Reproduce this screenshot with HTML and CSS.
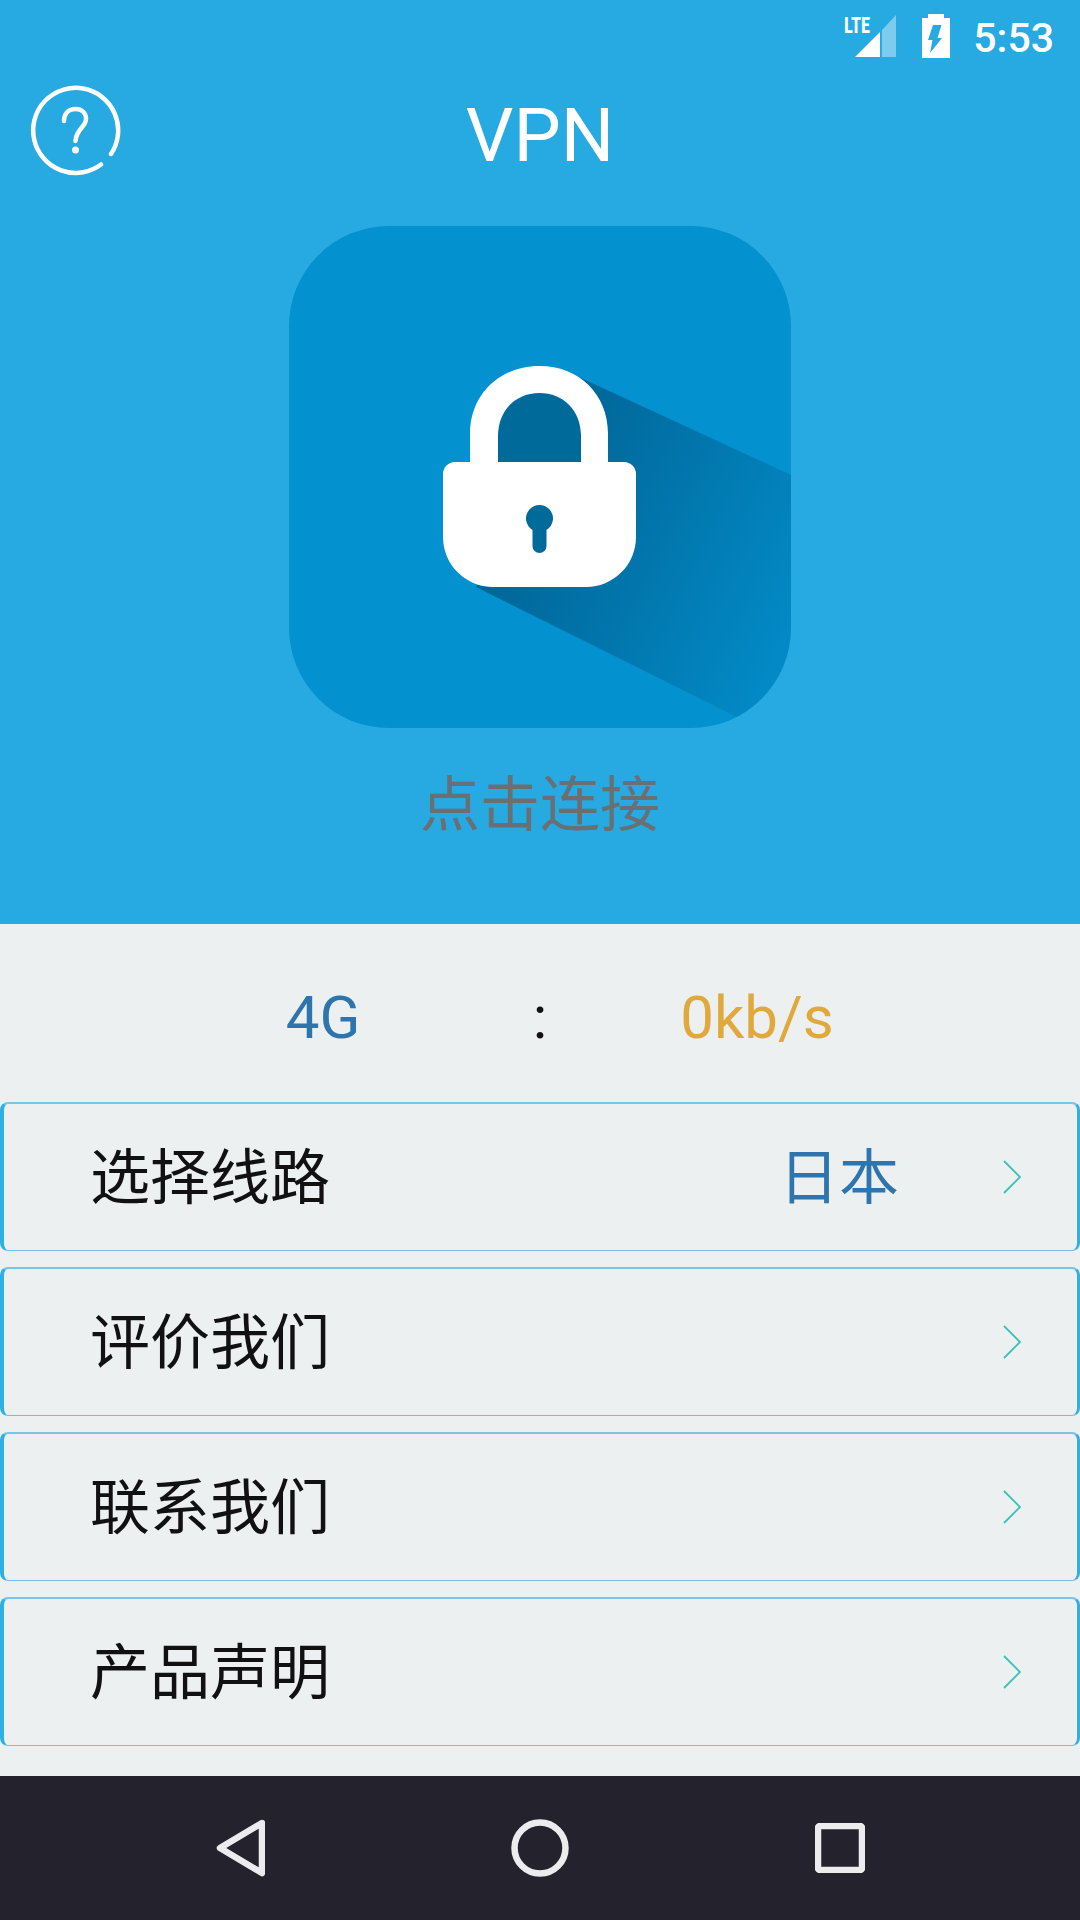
FILE: index.html
```html
<!DOCTYPE html>
<html lang="zh-CN">
<head>
<meta charset="utf-8">
<title>VPN</title>
<link rel="stylesheet" href="styles.css">
</head>
<body>
<div class="screen">
  <section class="hero">
    <div class="status">
      <svg class="ic-signal" width="54" height="44" viewBox="0 0 54 44">
        <text class="lte" x="1" y="19" textLength="26" lengthAdjust="spacingAndGlyphs">LTE</text>
        <path d="M12 43 L37 18 V43 Z" fill="#fff"/>
        <path d="M39 16 L53 1 V43 H39 Z" fill="#fff" fill-opacity=".4"/>
      </svg>
      <svg class="ic-battery" width="28" height="44" viewBox="0 0 28 44">
        <path fill-rule="evenodd" fill="#fff" d="M6 0 H22 V4 H28 V44 H0 V4 H6 Z M11 11 H19.500 L15.500 24 H20 L8 39 L10.500 26 H6 Z"/>
      </svg>
      <span class="clock">5:53</span>
    </div>
    <div class="titlebar">
      <svg class="ic-help" width="94" height="94" viewBox="0 0 94 94">
        <path d="M83 69 A42.500 42.500 0 1 0 73 79.500" fill="none" stroke="#fff" stroke-width="4.500" stroke-linecap="round"/>
        <path d="M36 36 C36 28 41 24 47.500 24 C54 24 58 28 58 34 C58 42 48 44 47.500 56" fill="none" stroke="#fff" stroke-width="4.500" stroke-linecap="round"/>
        <circle cx="47.500" cy="65" r="3.500" fill="#fff"/>
      </svg>
      <h1 class="title">VPN</h1>
    </div>
    <div class="lock-tile">
      <svg width="502" height="502" viewBox="0 0 502 502">
        <defs>
          <linearGradient id="shade" gradientUnits="userSpaceOnUse" x1="220" y1="220" x2="580" y2="390">
            <stop offset="0" stop-color="#005f8f" stop-opacity=".95"/>
            <stop offset="1" stop-color="#005f8f" stop-opacity="0"/>
          </linearGradient>
        </defs>
        <path d="M292 152 L502 249 V502 H470 L187 361 Z" fill="url(#shade)"/>
        <path d="M209 236 V210 C209 185 226 167 250.500 167 C275 167 292 185 292 210 V236 Z" fill="#006a9b"/>
        <path fill="#fff" fill-rule="evenodd" d="M181 236 V208 C181 168 211 140 250.500 140 C290 140 319 168 319 208 V236 H335 A12 12 0 0 1 347 248 V311 A50 50 0 0 1 297 361 H204 A50 50 0 0 1 154 311 V248 A12 12 0 0 1 166 236 Z M209 236 H292 V210 C292 185 275 167 250.500 167 C226 167 209 185 209 210 Z"/>
        <path fill="#006a9b" d="M243.500 304 A13.500 13.500 0 1 1 257.500 304 V320 A7 7 0 0 1 243.500 320 Z"/>
      </svg>
    </div>
    <p class="connect">点击连接</p>
  </section>
  <main class="panel">
    <div class="speed">
      <span class="speed-item net">4G</span>
      <span class="speed-item sep">:</span>
      <span class="speed-item rate">0kb/s</span>
    </div>
    <ul class="menu">
      <li class="row"><span class="row-label">选择线路</span><span class="row-value">日本</span><svg class="chev" width="18" height="34" viewBox="0 0 18 34"><path d="M1 1 L17 17 L1 33" fill="none" stroke="#3cc1b6" stroke-width="1.800"/></svg></li>
      <li class="row"><span class="row-label">评价我们</span><svg class="chev" width="18" height="34" viewBox="0 0 18 34"><path d="M1 1 L17 17 L1 33" fill="none" stroke="#3cc1b6" stroke-width="1.800"/></svg></li>
      <li class="row"><span class="row-label">联系我们</span><svg class="chev" width="18" height="34" viewBox="0 0 18 34"><path d="M1 1 L17 17 L1 33" fill="none" stroke="#3cc1b6" stroke-width="1.800"/></svg></li>
      <li class="row"><span class="row-label">产品声明</span><svg class="chev" width="18" height="34" viewBox="0 0 18 34"><path d="M1 1 L17 17 L1 33" fill="none" stroke="#3cc1b6" stroke-width="1.800"/></svg></li>
    </ul>
  </main>
  <nav class="navbar">
    <svg width="50" height="58" viewBox="0 0 50 58"><path d="M47 4 L5 29 L47 54 Z" fill="none" stroke="#ecebee" stroke-width="6.500" stroke-linejoin="round"/></svg>
    <svg width="58" height="58" viewBox="0 0 58 58"><circle cx="29" cy="29" r="25.500" fill="none" stroke="#ecebee" stroke-width="6.500"/></svg>
    <svg width="50" height="50" viewBox="0 0 50 50"><rect x="3" y="3" width="44" height="44" rx="2" fill="none" stroke="#ecebee" stroke-width="6.500"/></svg>
  </nav>
</div>
</body>
</html>
```
FILE: styles.css
```css
* { box-sizing: border-box; }
html, body { margin: 0; padding: 0; }
body { width: 1080px; height: 1920px; overflow: hidden; font-family: Roboto, "Noto Sans CJK SC", sans-serif; }
.screen { width: 1080px; height: 1920px; display: flex; flex-direction: column; background: #ecf0f1; }

.hero { height: 924px; background: #27aae1; display: flex; flex-direction: column; align-items: center; }
.status { width: 100%; height: 76px; display: flex; justify-content: flex-end; align-items: flex-start; padding: 14px 26px 0 0; }
.ic-signal { margin-right: 25px; }
.ic-battery { margin-right: 23px; }
.lte { font: 700 22px "Roboto Condensed", Roboto, sans-serif; fill: #fff; }
.clock { color: #fff; font-size: 41px; font-weight: 500; line-height: 46px; margin-top: 1px; }

.titlebar { width: 100%; height: 112px; position: relative; display: flex; justify-content: center; align-items: center; padding-top: 6px; }
.ic-help { position: absolute; left: 28px; top: 9px; }
.title { margin: 0; color: #fff; font-size: 75px; font-weight: 400; line-height: 90px; }

.lock-tile { width: 502px; height: 502px; margin-top: 38px; border-radius: 100px; background: #0391cf; overflow: hidden; flex: none; }
.lock-tile svg { display: block; }
.connect { margin: 30px 0 0; color: #6a6f73; font: 400 60px/84px "Noto Sans CJK SC", sans-serif; }

.panel { flex: 1; display: flex; flex-direction: column; }
.speed { height: 178px; padding-top: 8px; display: flex; justify-content: center; align-items: center; font-size: 60px; }
.speed-item { width: 217px; text-align: center; }
.net { color: #2e75ae; }
.sep { color: #111; }
.rate { color: #e0a93b; }

.menu { list-style: none; margin: 0; padding: 0; display: flex; flex-direction: column; gap: 16px; }
.row { height: 149px; display: flex; align-items: center; padding: 0 56px 0 86px; border-style: solid; border-width: 2px 3px 1px 4px; border-color: #7cc4e6 #35ade0 #7fbcdc #2fb0e5; border-radius: 8px; font: 400 60px/84px "Noto Sans CJK SC", sans-serif; }
.row-label { flex: 1; color: #111; padding-bottom: 9px; }
.row-value { color: #2e75ae; margin-right: 104px; padding-bottom: 9px; }

.navbar { height: 144px; background: #24222c; display: flex; align-items: center; padding: 0 215px; justify-content: space-between; }
```
